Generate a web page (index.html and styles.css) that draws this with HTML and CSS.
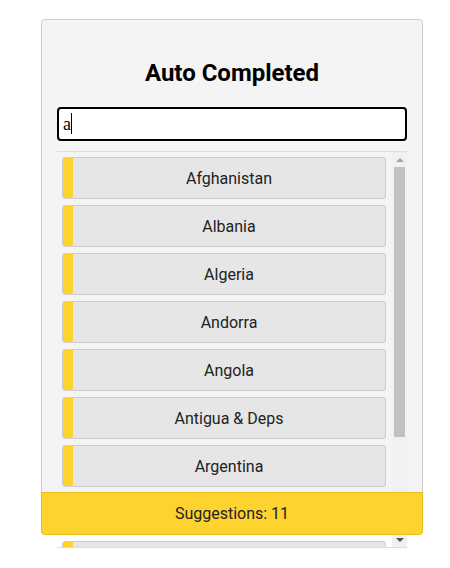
FILE: index.html
```html
<!DOCTYPE html>
<html>
<head>
<meta charset="utf-8">
<link rel="stylesheet" href="styles.css">
</head>
<body>
<div class="card">
  <h2 class="title">Auto Completed</h2>
  <div class="field">
    <input class="search" type="text" value="a">
    <span class="caret"></span>
  </div>
  <div class="list">
    <div class="items">
      <div class="item"><span class="bar"></span><span class="label">Afghanistan</span></div>
      <div class="item"><span class="bar"></span><span class="label">Albania</span></div>
      <div class="item"><span class="bar"></span><span class="label">Algeria</span></div>
      <div class="item"><span class="bar"></span><span class="label">Andorra</span></div>
      <div class="item"><span class="bar"></span><span class="label">Angola</span></div>
      <div class="item"><span class="bar"></span><span class="label">Antigua &amp; Deps</span></div>
      <div class="item"><span class="bar"></span><span class="label">Argentina</span></div>
      <div class="item"><span class="bar"></span><span class="label">Armenia</span></div>
      <div class="item"><span class="bar"></span><span class="label">Australia</span></div>
    </div>
    <div class="scrollbar">
      <div class="arrow"><span class="tri-up"></span></div>
      <div class="track"><div class="thumb"></div></div>
      <div class="arrow"><span class="tri-down"></span></div>
    </div>
  </div>
  <div class="footer">Suggestions: 11</div>
</div>
</body>
</html>
```
FILE: styles.css
```css
html, body {
  margin: 0;
  padding: 0;
  background: #ffffff;
}
body {
  box-sizing: border-box;
  min-height: 568px;
  padding: 19px 0 0 41px;
  font-family: Roboto, "Liberation Sans", sans-serif;
  color: #222;
}
.card {
  position: relative;
  box-sizing: border-box;
  width: 382px;
  height: 516px;
  background: #f4f4f4;
  border: 1px solid #cfcfcf;
  border-radius: 4px;
  padding: 0 15px;
}
.title {
  margin: 0;
  padding-top: 39px;
  height: 28px;
  line-height: 28px;
  font-size: 24px;
  font-weight: 700;
  text-align: center;
  color: #000;
}
.field {
  position: relative;
  margin-top: 20px;
}
.search {
  display: block;
  box-sizing: border-box;
  width: 350px;
  height: 34px;
  border: 2px solid #000;
  border-radius: 4px;
  padding: 0 4px;
  font-family: "Liberation Serif", serif;
  font-size: 18px;
  color: #000;
  background: #fff;
  outline: none;
  caret-color: transparent;
}
.caret {
  position: absolute;
  left: 14px;
  top: 6px;
  width: 1px;
  height: 21px;
  background: #000;
}
.list {
  box-sizing: border-box;
  margin-top: 10px;
  height: 397px;
  display: flex;
  overflow: hidden;
  border-top: 1px solid #dcdcdc;
  border-bottom: 1px solid #dcdcdc;
}
.items {
  flex: 1;
  min-width: 0;
  overflow: hidden;
  padding: 5px 6px 0 5px;
  display: flex;
  flex-direction: column;
  gap: 6px;
}
.item {
  flex: 0 0 auto;
  display: flex;
  box-sizing: border-box;
  height: 42px;
  background: #e6e6e6;
  border: 1px solid #cccccc;
  border-radius: 3px;
  overflow: hidden;
}
.bar {
  width: 10px;
  background: #fed330;
}
.label {
  flex: 1;
  display: flex;
  align-items: center;
  justify-content: center;
  padding-top: 1px;
  font-size: 16px;
  color: #222;
}
.scrollbar {
  width: 15px;
  flex: 0 0 15px;
  background: #f1f1f1;
  display: flex;
  flex-direction: column;
}
.arrow {
  height: 15px;
  flex: 0 0 15px;
  display: flex;
  align-items: center;
  justify-content: center;
}
.tri-up {
  width: 0;
  height: 0;
  border-left: 4px solid transparent;
  border-right: 4px solid transparent;
  border-bottom: 4px solid #a3a3a3;
}
.tri-down {
  width: 0;
  height: 0;
  border-left: 4px solid transparent;
  border-right: 4px solid transparent;
  border-top: 4px solid #505050;
}
.track {
  flex: 1;
  padding: 0 2px;
}
.thumb {
  height: 270px;
  background: #c1c1c1;
}
.footer {
  position: absolute;
  left: -1px;
  right: -1px;
  bottom: -1px;
  height: 43px;
  box-sizing: border-box;
  background: #fed330;
  border: 1px solid #e8bd1c;
  border-radius: 0 0 4px 4px;
  display: flex;
  align-items: center;
  justify-content: center;
  font-size: 16px;
  color: #222;
}
```
